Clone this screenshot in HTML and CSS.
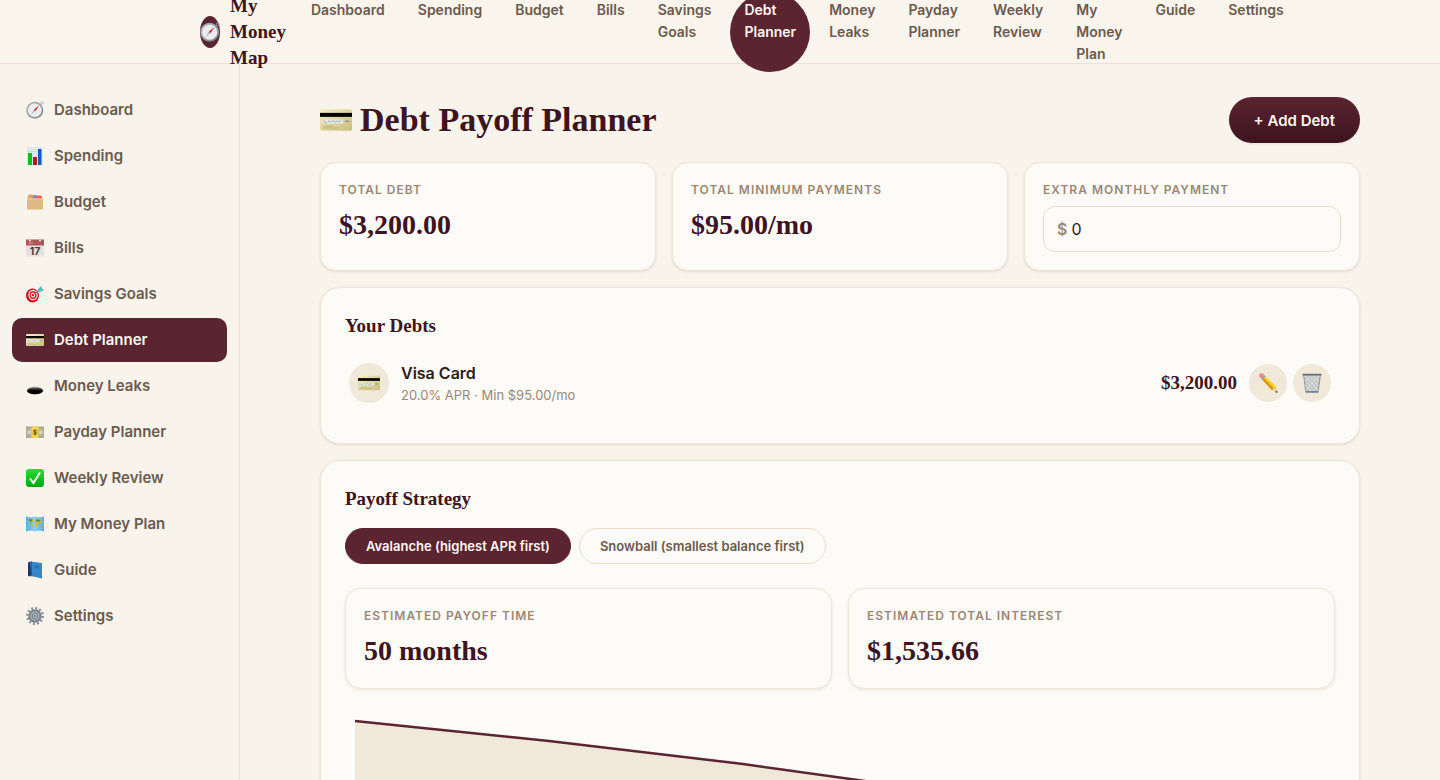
FILE: index.html
```
<!doctype html>
<html lang="en">
<head>
<meta charset="utf-8">
<title>Debt Planner - My Money Map</title>
<meta name="viewport" content="width=device-width,initial-scale=1">
<link rel="stylesheet" href="styles.css">
</head>
<body>
<svg class="sprite" aria-hidden="true">
	<defs>
		<linearGradient id="gMetal" x1="0" y1="0" x2="1" y2="1"><stop offset="0" stop-color="#b8bdc2"/><stop offset="1" stop-color="#6f7880"/></linearGradient>
		<linearGradient id="gCard" x1="0" y1="0" x2="1" y2="1"><stop offset="0" stop-color="#f5f0c0"/><stop offset="1" stop-color="#c9bd80"/></linearGradient>
		<linearGradient id="gGreen" x1="0" y1="0" x2="0" y2="1"><stop offset="0" stop-color="#2bdc3a"/><stop offset="1" stop-color="#00a80c"/></linearGradient>
		<linearGradient id="gHole" x1="0" y1="0" x2="0" y2="1"><stop offset="0" stop-color="#77777a"/><stop offset=".5" stop-color="#000"/></linearGradient>
		<linearGradient id="gSea" x1="0" y1="0" x2="1" y2="0"><stop offset="0" stop-color="#4fb3e8"/><stop offset=".5" stop-color="#8fd3f5"/><stop offset="1" stop-color="#4fb3e8"/></linearGradient>
	</defs>
	<symbol id="compass" viewBox="0 0 36 36">
		<circle cx="32" cy="4" r="2.6" fill="none" stroke="#a3abb2" stroke-width="1.4"/>
		<circle cx="17.5" cy="18.5" r="17" fill="url(#gMetal)"/>
		<circle cx="17.5" cy="18.5" r="13.6" fill="#eceeee" stroke="#d2d6d8"/>
		<path d="M26 9L19.500 20L16 17Z" fill="#f0201c"/>
		<path d="M9 28L16 17L19.500 20Z" fill="#b9bdc0"/>
		<circle cx="17.500" cy="18.500" r="1.500" fill="#777"/>
	</symbol>
	<symbol id="chart" viewBox="0 0 36 36">
		<path d="M2 0H33V36H2Z" fill="#dce8ee"/>
		<path d="M2 9H33M2 18H33M2 27H33" stroke="#c2d2dc"/>
		<path d="M4 12H12V36H4Z" fill="#12bd18"/>
		<path d="M14 20H22V36H14Z" fill="#c0141a"/>
		<path d="M24 4H31V36H24Z" fill="#1459c4"/>
	</symbol>
	<symbol id="dividers" viewBox="0 0 36 36">
		<path d="M4 12V6Q4 3 7 3H11Q14 3 14 6V12Z" fill="#e3a35c"/>
		<path d="M13 12V7Q13 4 16 4H20Q23 4 23 7V12Z" fill="#8c83c4"/>
		<path d="M22 12V7Q22 5 25 5H29Q32 5 32 8V12Z" fill="#f0604c"/>
		<path d="M2 11H34V31Q34 33 32 33H4Q2 33 2 31Z" fill="#e0b883"/>
		<path d="M2 11H34V13H2Z" fill="#edcb9c"/>
	</symbol>
	<symbol id="calendar" viewBox="0 0 36 36">
		<path d="M0 1H36V35H0Z" fill="#e2e2e3"/>
		<path d="M0 1H36V13H0Z" fill="#b0575a"/>
		<path d="M5 8H14" stroke="#d99c9d" stroke-width="2"/>
		<circle cx="8" cy="3" r="2" fill="#eee"/><circle cx="28" cy="3" r="2" fill="#eee"/>
		<text class="cal-day" x="18" y="32" text-anchor="middle">17</text>
	</symbol>
	<symbol id="target" viewBox="0 0 36 36">
		<ellipse cx="13" cy="21" rx="13" ry="14" fill="#c4161d"/>
		<ellipse cx="14" cy="20" rx="9.5" ry="10.500" fill="#f3e9e7"/>
		<ellipse cx="14" cy="20" rx="7" ry="8" fill="#d2232a"/>
		<ellipse cx="14" cy="20" rx="4.500" ry="5" fill="#f3e9e7"/>
		<ellipse cx="14" cy="20" rx="2.200" ry="2.500" fill="#c4161d"/>
		<path d="M14 20L27 10" stroke="#3d8089" stroke-width="2"/>
		<path d="M24 8L31 2L32 7L36 10L28 14L24 13Z" fill="#4dbfc9"/>
	</symbol>
	<symbol id="card" viewBox="0 0 36 36">
		<rect x="0" y="6" width="36" height="24" rx="2" fill="url(#gCard)"/>
		<path d="M0 10H36V14.500H0Z" fill="#050505"/>
		<path d="M3 17.500H26V22H3Z" fill="#e9ecdc"/>
		<path d="M4 20.500q1-3 2 0t2 0" fill="none" stroke="#7f9bd6" stroke-width=".9"/>
		<path d="M9 20L11 19L13 20.500L15 18.500L17 20.500L19 19L21 20L24 19" fill="none" stroke="#7f9bd6" stroke-width=".9"/>
		<path d="M28 19.500H33" stroke="#7b88a5" stroke-width="1.200"/>
		<path d="M3 25H14M3 27H20" stroke="#b3a86c" stroke-width=".8"/>
	</symbol>
	<symbol id="hole" viewBox="0 0 36 36">
		<ellipse cx="18" cy="27" rx="17" ry="8" fill="#c9c7c4"/>
		<ellipse cx="18" cy="27.500" rx="16" ry="7" fill="url(#gHole)"/>
	</symbol>
	<symbol id="cash" viewBox="0 0 36 36">
		<rect x="0" y="7" width="36" height="23" fill="#b5b69c"/>
		<rect x="2" y="9" width="32" height="19" fill="none" stroke="#8f9079"/>
		<circle cx="6" cy="18.500" r="4" fill="#d4d3bd"/><circle cx="30" cy="18.500" r="4" fill="#d4d3bd"/>
		<rect x="11" y="7" width="14" height="23" fill="#f5d74e"/>
		<circle cx="18" cy="18.500" r="6.500" fill="#e3c046"/>
		<path d="M21 15.500Q18 13.500 16 15.500T18 18.500T20 21.500T15 21.500M18 12.500V24.500" fill="none" stroke="#54481a" stroke-width="1.600"/>
	</symbol>
	<symbol id="check" viewBox="0 0 36 36">
		<rect width="36" height="36" rx="6" fill="url(#gGreen)"/>
		<path d="M8 19L15 28L28 7" fill="none" stroke="#fff" stroke-width="4"/>
	</symbol>
	<symbol id="map" viewBox="0 0 36 36">
		<path d="M0 3L9 5L18 3L27 5L36 3V33L27 31L18 33L9 31L0 33Z" fill="url(#gSea)"/>
		<path d="M4 8L15 7L14 12L11 15L14 19L12 26L9 20L6 14Z" fill="#c2b63c"/>
		<path d="M18 9L23 7L33 9L31 15L28 18L25 15L24 24L21 25L19 18L17 15Z" fill="#d9b540"/>
		<path d="M5 9L13 8L11 13L7 13ZM20 9L30 10L27 13L20 13Z" fill="#5a8e36"/>
		<path d="M29 22L33 21L33 26L29 26Z" fill="#d9943c"/>
		<path d="M9 5V31M27 5V31" stroke="#3a9cd2" stroke-opacity=".5"/>
	</symbol>
	<symbol id="book" viewBox="0 0 36 36">
		<path d="M4 3L9 1L11 29L6 31L4 29Z" fill="#173a5e"/>
		<path d="M6 31L11 29L31 36L29 33Z" fill="#d7dde2"/>
		<path d="M9 1L32 4V35L10 30Z" fill="#3585c8"/>
		<path d="M9 1L12 1.500V30.500L10 30Z" fill="#1f5f9c"/>
		<path d="M17 10L27 11.500M18 13L25 14" stroke="#205f99" stroke-width="1.300"/>
	</symbol>
	<symbol id="gear" viewBox="0 0 36 36">
		<circle cx="18" cy="18" r="15.500" fill="none" stroke="#8c959b" stroke-width="5" stroke-dasharray="4 4.110"/>
		<circle cx="18" cy="18" r="11.500" fill="#a3abb0" stroke="#7b858c" stroke-width="4"/>
		<circle cx="18" cy="18" r="6" fill="#687b8f"/>
		<circle cx="18" cy="18" r="4" fill="#d7dbdd"/>
		<circle cx="18" cy="18" r="1.800" fill="#444c55"/>
	</symbol>
	<symbol id="pencil" viewBox="0 0 36 36">
		<path d="M2 6Q1 3 4 1Q7-1 10 2L12 5L6 11Z" fill="#ef8e91"/>
		<path d="M8 13L6 10L12 4L15 7Z" fill="#7ba0c6"/>
		<path d="M14 6L33 25L25 31L8 12Z" fill="#f9c313"/>
		<path d="M11 10L29 28L25 31L8 12Z" fill="#dc9510"/>
		<path d="M14 6L33 25L31 27L12 8Z" fill="#ffdf42"/>
		<path d="M33 25L35 36L25 31L27 28L30 28Z" fill="#eccf9d"/>
		<path d="M34.300 32L35 36L31 34Z" fill="#333"/>
	</symbol>
	<symbol id="trash" viewBox="0 0 36 36">
		<path d="M3 3H33L29 35H7Z" fill="#dadcda"/>
		<path d="M4 8L28 34M5 16L22 35M6 25L15 35M9 4L30 27M16 4L31 20M24 4L32 12M32 8L8 34M31 16L14 35M30 25L21 35M27 4L6 26M20 4L5 19M12 4L4 12" stroke="#979e9f" stroke-width=".9"/>
		<path d="M3 4L7 35M33 4L29 35" stroke="#7d898f" stroke-width="1.500"/>
		<path d="M1 1.500H35V4.500H1Z" fill="#58677a"/>
		<path d="M7 32.500H29V35.500H7Z" fill="#6e8194"/>
	</symbol>
</svg>

<header class="topbar">
	<div class="topbar-inner">
		<a class="brand" href="#">
			<span class="brand-mark"><svg><use href="#compass"/></svg></span>
			<span class="brand-name">My Money Map</span>
		</a>
		<nav class="topnav" aria-label="Main">
			<a href="#">Dashboard</a>
			<a href="#">Spending</a>
			<a href="#">Budget</a>
			<a href="#">Bills</a>
			<a href="#">Savings Goals</a>
			<a href="#" class="active">Debt Planner</a>
			<a href="#">Money Leaks</a>
			<a href="#">Payday Planner</a>
			<a href="#">Weekly Review</a>
			<a href="#">My Money Plan</a>
			<a href="#">Guide</a>
			<a href="#">Settings</a>
		</nav>
	</div>
</header>

<div class="layout">
	<nav class="sidebar" aria-label="Sections">
		<a href="#"><svg><use href="#compass"/></svg>Dashboard</a>
		<a href="#"><svg><use href="#chart"/></svg>Spending</a>
		<a href="#"><svg><use href="#dividers"/></svg>Budget</a>
		<a href="#"><svg><use href="#calendar"/></svg>Bills</a>
		<a href="#"><svg><use href="#target"/></svg>Savings Goals</a>
		<a href="#" class="active"><svg><use href="#card"/></svg>Debt Planner</a>
		<a href="#"><svg><use href="#hole"/></svg>Money Leaks</a>
		<a href="#"><svg><use href="#cash"/></svg>Payday Planner</a>
		<a href="#"><svg><use href="#check"/></svg>Weekly Review</a>
		<a href="#"><svg><use href="#map"/></svg>My Money Plan</a>
		<a href="#"><svg><use href="#book"/></svg>Guide</a>
		<a href="#"><svg><use href="#gear"/></svg>Settings</a>
	</nav>

	<main class="main">
		<div class="content">
			<div class="page-head">
				<h1><svg><use href="#card"/></svg>Debt Payoff Planner</h1>
				<button type="button" class="btn-primary">+ Add Debt</button>
			</div>

			<div class="stats stats-3">
				<div class="stat">
					<div class="stat-label">Total Debt</div>
					<div class="stat-value">$3,200.00</div>
				</div>
				<div class="stat">
					<div class="stat-label">Total Minimum Payments</div>
					<div class="stat-value">$95.00/mo</div>
				</div>
				<div class="stat">
					<label class="stat-label" for="extra">Extra Monthly Payment</label>
					<div class="money-input">
						<span>$</span>
						<input id="extra" type="text" inputmode="decimal" value="0">
					</div>
				</div>
			</div>

			<section class="card">
				<h2>Your Debts</h2>
				<div class="debt">
					<span class="debt-icon"><svg><use href="#card"/></svg></span>
					<div class="debt-info">
						<div class="debt-name">Visa Card</div>
						<div class="debt-meta">20.0% APR · Min $95.00/mo</div>
					</div>
					<div class="debt-amount">$3,200.00</div>
					<div class="debt-actions">
						<button type="button" aria-label="Edit"><svg><use href="#pencil"/></svg></button>
						<button type="button" aria-label="Delete"><svg><use href="#trash"/></svg></button>
					</div>
				</div>
			</section>

			<section class="card">
				<h2>Payoff Strategy</h2>
				<div class="tabs">
					<button type="button" class="active">Avalanche (highest APR first)</button>
					<button type="button">Snowball (smallest balance first)</button>
				</div>
				<div class="stats stats-2">
					<div class="stat">
						<div class="stat-label">Estimated Payoff Time</div>
						<div class="stat-value">50 months</div>
					</div>
					<div class="stat">
						<div class="stat-label">Estimated Total Interest</div>
						<div class="stat-value">$1,535.66</div>
					</div>
				</div>
				<svg class="payoff-chart" viewBox="0 0 990 160" role="img" aria-label="Balance over time">
					<path class="area" d="M10 10L204 30L398 53L592 80L786 112L980 150H10Z"/>
					<path class="line" d="M10 10L204 30L398 53L592 80L786 112L980 150"/>
				</svg>
			</section>
		</div>
	</main>
</div>
</body>
</html>
```
FILE: styles.css
```
*{box-sizing:border-box;}
body{margin:0;background:#f8f3eb;color:#2b1d1a;font-family:Inter,"Liberation Sans",sans-serif;font-size:16px;line-height:24px;}
a{color:inherit;text-decoration:none;}
button,input{font-family:inherit;}
button{cursor:pointer;}
svg{display:block;flex:none;}
.sprite{position:absolute;width:0;height:0;}
.cal-day{font:700 21px Inter,sans-serif;fill:#444;}

/* top bar */
.topbar{position:sticky;top:0;z-index:2;height:64px;background:#f9f4ec;border-bottom:1px solid #ebe3d0;}
.topbar-inner{display:flex;align-items:center;gap:11px;height:100%;max-width:1040px;margin:0 auto;}
.brand{display:flex;align-items:center;gap:10px;color:#3d1420;}
.brand-mark{display:flex;align-items:center;flex:none;width:20px;height:32px;border-radius:50%;background:#5a2430;}
.brand-mark svg{width:20px;height:20px;}
.brand-name{font-family:"Liberation Serif",serif;font-size:19px;font-weight:700;line-height:26px;}
.topnav{display:flex;gap:5px;}
.topnav a{padding:7px 14px;border-radius:999px;color:#6b5a4e;font-size:14px;font-weight:600;line-height:22px;}
.topnav .active{background:#5a2430;color:#fdf8f0;}

/* side menu */
.layout{display:flex;}
.sidebar{position:sticky;top:64px;flex:none;display:flex;flex-direction:column;gap:2px;width:240px;height:calc(100vh - 64px);padding:24px 12px;border-right:1px solid #ebe3d0;}
.sidebar a{display:flex;align-items:center;gap:10px;padding:11px 14px;border-radius:10px;color:#6b5a4e;font-size:15px;font-weight:600;line-height:22px;}
.sidebar svg{width:18px;height:18px;}
.sidebar .active{background:#5a2430;color:#fdf8f0;}

/* page */
.main{flex:1;min-width:0;padding:32px 24px;}
.content{display:flex;flex-direction:column;gap:16px;max-width:1040px;margin:0 auto;}
.page-head{display:flex;align-items:center;justify-content:space-between;margin-bottom:2px;}
h1,h2{margin:0;color:#3d1420;font-family:"Liberation Serif",serif;font-weight:700;}
h1{display:flex;align-items:center;gap:8px;font-size:34px;line-height:48px;}
h1 svg{width:32px;height:32px;}
h2{font-size:19px;line-height:27px;}
.btn-primary{height:46px;padding:0 25px;border:0;border-radius:999px;background:linear-gradient(#5a2430,#3d1420);box-shadow:0 1px 2px rgba(61,20,32,.08);color:#fdf8f0;font-size:15px;font-weight:600;}

.stats{display:grid;gap:16px;}
.stats-3{grid-template-columns:repeat(3,1fr);}
.stats-2{grid-template-columns:repeat(2,1fr);}
.stat,.card{background:#fdfbf7;border:1px solid #f0e6d4;box-shadow:0 1px 3px rgba(90,60,30,.12);}
.stat{padding:18px;border-radius:16px;}
.stat-label{display:block;margin-bottom:7px;color:#9a8775;font-size:12px;font-weight:600;line-height:18px;letter-spacing:1px;text-transform:uppercase;}
.stat-value{color:#3d1420;font-family:"Liberation Serif",serif;font-size:28px;font-weight:700;line-height:38px;}
.money-input{display:flex;align-items:center;gap:4px;height:46px;padding:0 13px;border:1px solid #e9dec8;border-radius:12px;}
.money-input span{color:#9a8775;font-weight:600;}
.money-input input{flex:1;min-width:0;padding:0;border:0;outline:0;background:none;color:#2b1d1a;font-size:16px;}

.card{padding:24px;border-radius:20px;}
.debt{display:flex;align-items:center;gap:12px;margin-top:8px;padding:14px 4px;}
.debt-icon{display:flex;align-items:center;justify-content:center;width:40px;height:40px;border-radius:50%;background:#f0e8d8;}
.debt-icon svg{width:22px;height:22px;}
.debt-info{flex:1;}
.debt-name{font-weight:600;line-height:24px;}
.debt-meta{color:#9a8775;font-size:13px;line-height:20px;}
.debt-amount{color:#3d1420;font-family:"Liberation Serif",serif;font-size:19px;font-weight:700;}
.debt-actions{display:flex;gap:6px;}
.debt-actions button{display:flex;align-items:center;justify-content:center;width:38px;height:38px;padding:0;border:0;border-radius:50%;background:#f0e8d8;}
.debt-actions svg{width:20px;height:20px;}

.tabs{display:flex;gap:8px;margin:16px 0 24px;}
.tabs button{height:36px;padding:0 20px;border:1px solid #e9dec8;border-radius:999px;background:none;color:#6b5a4e;font-size:13px;font-weight:600;}
.tabs .active{background:#5a2430;border-color:#5a2430;color:#fdf8f0;}

.payoff-chart{width:100%;margin-top:22px;}
.payoff-chart .area{fill:#f0e8d8;}
.payoff-chart .line{fill:none;stroke:#5a2430;stroke-width:2.500;}
```
